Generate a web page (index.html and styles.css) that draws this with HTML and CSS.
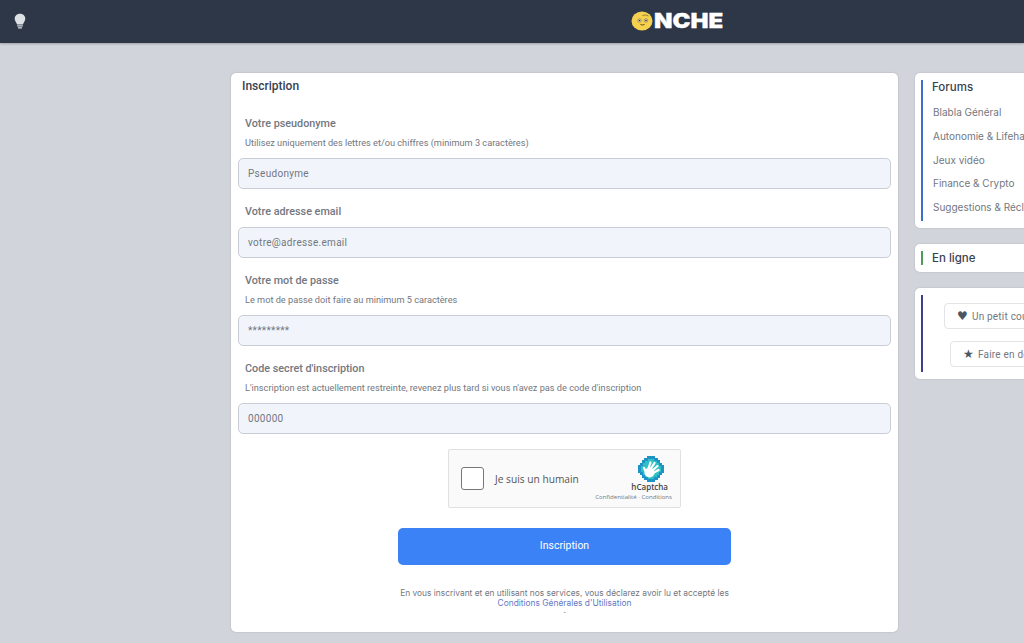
FILE: index.html
```html
<!DOCTYPE html>
<html lang="fr">
<head>
    <meta charset="UTF-8">
    <meta name="viewport" content="width=device-width, initial-scale=1.0">
    <title>Inscription - Onche</title>
    <link rel="stylesheet" href="styles.css">
</head>
<body>
    <header class="topbar">
        <svg class="bulb" width="12" height="16" viewBox="0 0 14 18">
            <path d="M7 0.500C3.300 0.500 0.800 3.100 0.800 6.300c0 2.800 2.200 4.200 2.700 6.700h7c0.500-2.500 2.700-3.900 2.700-6.700C13.200 3.100 10.700 0.500 7 0.500z" fill="#dde1e6"/>
            <rect x="3.700" y="14" width="6.600" height="1.400" fill="#dde1e6"/>
            <rect x="4.500" y="16.200" width="5" height="1.500" rx="0.700" fill="#dde1e6"/>
        </svg>
        <div class="logo">
            <svg width="23" height="20" viewBox="0 0 23 20">
                <ellipse cx="11" cy="10" rx="10.500" ry="9.500" fill="#f5d14e"/>
                <circle cx="8.500" cy="9.500" r="1.700" fill="#fff8d8" stroke="#4a4020" stroke-width="0.500"/>
                <circle cx="8.500" cy="9.500" r="0.800" fill="#2c2614"/>
                <circle cx="15" cy="9.500" r="1.700" fill="#fff8d8" stroke="#4a4020" stroke-width="0.500"/>
                <circle cx="15" cy="9.500" r="0.800" fill="#2c2614"/>
                <path d="M11.500 4.500q3-1.500 6 0.500" fill="none" stroke="#8a7430" stroke-width="0.900"/>
                <path d="M9.500 13.500q2 1 4 0" fill="none" stroke="#4a4020" stroke-width="0.900"/>
            </svg>
            <span class="logo-text">NCHE</span>
        </div>
    </header>

    <div class="page">
        <main class="card">
            <h1 class="card-title">Inscription</h1>
            <form class="form">
                <div class="field">
                    <label class="label">Votre pseudonyme</label>
                    <p class="hint">Utilisez uniquement des lettres et/ou chiffres (minimum 3 caractères)</p>
                    <input class="input" type="text" placeholder="Pseudonyme">
                </div>
                <div class="field">
                    <label class="label">Votre adresse email</label>
                    <input class="input" type="text" placeholder="votre@adresse.email">
                </div>
                <div class="field">
                    <label class="label">Votre mot de passe</label>
                    <p class="hint">Le mot de passe doit faire au minimum 5 caractères</p>
                    <input class="input" type="text" placeholder="*********">
                </div>
                <div class="field">
                    <label class="label">Code secret d'inscription</label>
                    <p class="hint">L'inscription est actuellement restreinte, revenez plus tard si vous n'avez pas de code d'inscription</p>
                    <input class="input" type="text" placeholder="000000">
                </div>

                <div class="captcha">
                    <span class="captcha-box"></span>
                    <span class="captcha-text">Je suis un humain</span>
                    <div class="captcha-brand">
                        <svg class="captcha-logo" width="26" height="26" viewBox="0 0 26 26">
                            <path d="M9 0h8v2h3v2h2v3h2v2h2v8h-2v2h-2v3h-2v2h-3v2H9v-2H6v-2H4v-3H2v-2H0V9h2V7h2V4h2V2h3z" fill="#1d93c6"/>
                            <path d="M10 3h6v2h3v2h2v3h2v6h-2v3h-2v2h-3v2h-6v-2H7v-2H5v-3H3v-6h2V7h2V5h3z" fill="#2fc0c6"/>
                            <g stroke="#fff" stroke-width="2.300" stroke-linecap="round">
                                <line x1="10" y1="14" x2="12.500" y2="6.500"/>
                                <line x1="12" y1="14" x2="16.500" y2="7"/>
                                <line x1="14" y1="15" x2="19.500" y2="10"/>
                                <line x1="15" y1="17" x2="20.500" y2="14"/>
                                <line x1="8" y1="16" x2="6" y2="12"/>
                            </g>
                            <circle cx="11.500" cy="16.500" r="5" fill="#fff"/>
                        </svg>
                        <span class="captcha-name">hCaptcha</span>
                        <span class="captcha-links">Confidentialité · Conditions</span>
                    </div>
                </div>

                <button class="submit" type="button">Inscription</button>

                <p class="terms">En vous inscrivant et en utilisant nos services, vous déclarez avoir lu et accepté les<br><a href="#">Conditions Générales d'Utilisation</a></p>
                <p class="terms-dot">-</p>
            </form>
        </main>

        <aside class="sidebar">
            <section class="box">
                <div class="box-inner blue">
                    <h2 class="box-title">Forums</h2>
                    <ul class="forums">
                        <li>Blabla Général</li>
                        <li>Autonomie &amp; Lifehacks</li>
                        <li>Jeux vidéo</li>
                        <li>Finance &amp; Crypto</li>
                        <li>Suggestions &amp; Réclamations</li>
                    </ul>
                </div>
            </section>
            <section class="box">
                <div class="box-inner green">
                    <h2 class="box-title">En ligne</h2>
                </div>
            </section>
            <section class="box">
                <div class="box-inner indigo">
                    <a class="pill"><span class="pill-icon">♥</span>Un petit coup de pouce</a>
                    <a class="pill pill-second"><span class="pill-icon">★</span>Faire en donation</a>
                </div>
            </section>
        </aside>
    </div>
</body>
</html>
```

FILE: styles.css
```css
html, body {
    height: 100%;
}
body {
    margin: 0;
    background: #d1d5db;
    font-family: 'Roboto', sans-serif;
    overflow: hidden;
}

.topbar {
    height: 43px;
    background: #2d3748;
    box-shadow: 0 1px 2px rgba(0, 0, 0, 0.25);
    display: flex;
    align-items: center;
    padding-left: 14px;
}
.bulb {
    margin-bottom: 2px;
}
.logo {
    display: flex;
    align-items: center;
    margin-left: 605px;
    margin-bottom: 2px;
}
.logo-text {
    font-family: 'Inter', sans-serif;
    font-weight: 900;
    font-size: 20px;
    color: #fff;
    -webkit-text-stroke: 0.3px #fff;
    transform: scaleX(1.2);
    transform-origin: left center;
}

.page {
    display: flex;
    align-items: flex-start;
    gap: 17px;
    width: 1200px;
    padding: 30px 0 0 231px;
}

.card {
    width: 667px;
    height: 559px;
    box-sizing: border-box;
    background: #fff;
    border-radius: 5px;
    box-shadow: 0 0 2px rgba(0, 0, 0, 0.2);
    padding: 0 7px;
}
.card-title {
    margin: 0;
    padding: 6px 0 0 4px;
    font-size: 12px;
    line-height: 15px;
    font-weight: 500;
    color: #374151;
}

.form {
    display: flex;
    flex-direction: column;
    padding-top: 23px;
}
.field {
    margin-bottom: 16px;
}
.label {
    display: block;
    padding-left: 7px;
    font-size: 10.8px;
    line-height: 14px;
    font-weight: 500;
    color: #737780;
}
.hint {
    margin: 5px 0 0;
    padding-left: 7px;
    font-size: 9.2px;
    line-height: 14px;
    color: #737780;
}
.input {
    display: block;
    width: 100%;
    height: 31px;
    box-sizing: border-box;
    margin-top: 8px;
    padding: 0 9px;
    background: #f1f5fb;
    border: 1px solid #c9ced6;
    border-radius: 5px;
    font-family: 'Roboto', sans-serif;
    font-size: 10px;
    letter-spacing: 0.3px;
}
.input::placeholder {
    color: #737780;
    opacity: 1;
}

.captcha {
    align-self: center;
    width: 233px;
    height: 59px;
    box-sizing: border-box;
    display: flex;
    align-items: center;
    background: #fafafa;
    border: 1px solid #e0e0e0;
    border-radius: 2px;
    padding: 0 8px 0 12px;
    margin-top: -1px;
}
.captcha-box {
    width: 23px;
    height: 23px;
    box-sizing: border-box;
    background: #fff;
    border: 1px solid #777;
    border-radius: 3px;
}
.captcha-text {
    margin-left: 11px;
    font-family: 'Open Sans', sans-serif;
    font-size: 10.2px;
    color: #555;
    flex: 1;
}
.captcha-brand {
    display: flex;
    flex-direction: column;
    align-items: flex-end;
}
.captcha-logo {
    margin-right: 8px;
}
.captcha-name {
    margin-right: 4px;
    font-family: 'Open Sans', sans-serif;
    font-size: 8px;
    line-height: 10px;
    font-weight: 600;
    color: #444;
}
.captcha-links {
    font-family: 'Open Sans', sans-serif;
    font-size: 6.1px;
    line-height: 10px;
    color: #777;
}

.submit {
    align-self: center;
    width: 333px;
    height: 37px;
    margin-top: 20px;
    padding: 0 0 2px;
    border: none;
    border-radius: 5px;
    background: #3b82f6;
    color: #fff;
    font-family: 'Roboto', sans-serif;
    font-size: 10.5px;
    font-weight: 400;
}

.terms {
    margin: 23px 0 0;
    text-align: center;
    font-family: 'Inter', sans-serif;
    font-size: 8.4px;
    line-height: 10px;
    color: #737780;
}
.terms a {
    color: #6478c4;
    text-decoration: none;
}
.terms-dot {
    margin: 0;
    text-align: center;
    font-size: 8px;
    line-height: 10px;
    color: #737780;
}

.sidebar {
    width: 260px;
    display: flex;
    flex-direction: column;
    gap: 16px;
}
.box {
    background: #fff;
    border-radius: 5px;
    box-shadow: 0 0 2px rgba(0, 0, 0, 0.15);
    padding: 7px 0 7px 6px;
}
.box-inner {
    border-left: 2px solid #000;
    padding-left: 9px;
}
.blue { border-color: #3b6fc9; }
.green { border-color: #4f9a5b; }
.indigo {
    border-color: #3f3f8f;
    height: 77px;
    box-sizing: border-box;
    display: flex;
    flex-direction: column;
    padding-left: 21px;
    padding-top: 8px;
    gap: 12px;
}

.box-title {
    margin: 0;
    font-family: 'Inter', sans-serif;
    font-size: 11.5px;
    line-height: 14px;
    font-weight: 500;
    color: #374151;
}
.forums {
    list-style: none;
    margin: 0;
    padding: 0 0 2px 1px;
    font-family: 'Inter', sans-serif;
    font-size: 10px;
    color: #737780;
}
.forums li {
    height: 23.75px;
    line-height: 24px;
    white-space: nowrap;
}
.forums li:first-child {
    margin-top: 6px;
}

.pill {
    display: flex;
    align-items: center;
    height: 26px;
    box-sizing: border-box;
    width: 190px;
    border: 1px solid #e2e4e8;
    border-radius: 4px;
    padding: 1px 0 0 12px;
    font-size: 10px;
    letter-spacing: 0.2px;
    color: #737780;
    white-space: nowrap;
}
.pill-second {
    margin-left: 6px;
}
.pill-icon {
    color: #4b5563;
    font-size: 12px;
    margin-right: 4px;
    font-family: 'DejaVu Sans', sans-serif;
}
```
